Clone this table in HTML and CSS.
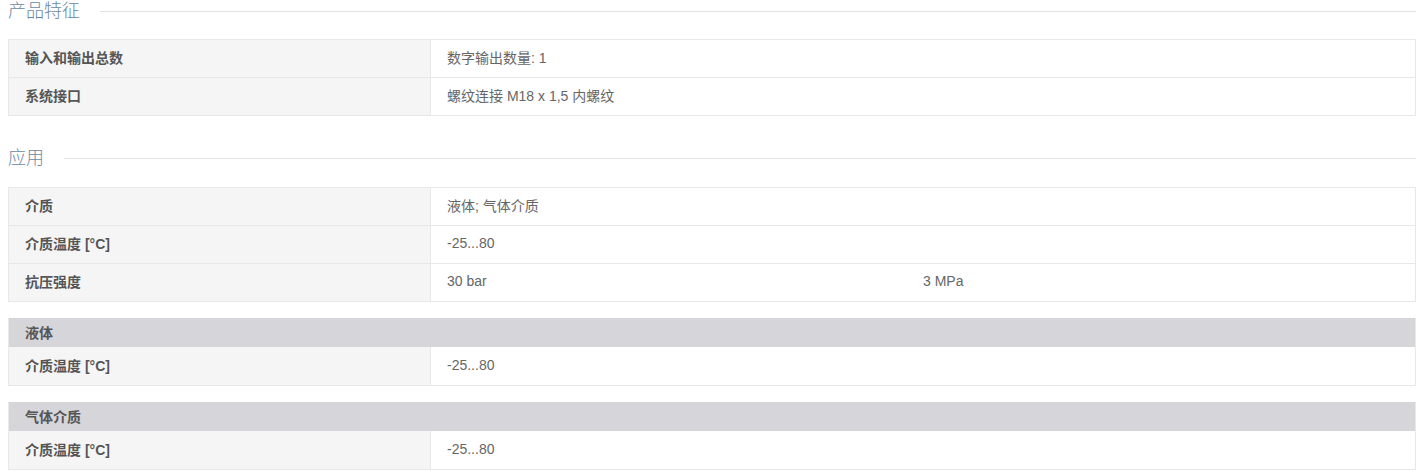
FILE: index.html
```html
<!DOCTYPE html>
<html lang="zh-CN">
<head>
<meta charset="utf-8">
<title>产品特征</title>
<link rel="stylesheet" href="styles.css">
</head>
<body>
<main class="specs">
  <section class="spec-section">
    <div class="spec-head"><h2 class="spec-title">产品特征</h2><span class="spec-rule"></span></div>
    <div class="spec-table">
      <div class="spec-row"><div class="spec-label">输入和输出总数</div><div class="spec-value">数字输出数量: 1</div></div>
      <div class="spec-row"><div class="spec-label">系统接口</div><div class="spec-value">螺纹连接 M18 x 1,5 内螺纹</div></div>
    </div>
  </section>

  <section class="spec-section">
    <div class="spec-head"><h2 class="spec-title">应用</h2><span class="spec-rule"></span></div>
    <div class="spec-table">
      <div class="spec-row"><div class="spec-label">介质</div><div class="spec-value">液体; 气体介质</div></div>
      <div class="spec-row"><div class="spec-label">介质温度 [°C]</div><div class="spec-value">-25...80</div></div>
      <div class="spec-row"><div class="spec-label">抗压强度</div><div class="spec-value"><span class="spec-sub">30 bar</span><span class="spec-sub">3 MPa</span></div></div>
    </div>
    <div class="spec-table spec-group">
      <div class="group-head">液体</div>
      <div class="spec-row"><div class="spec-label">介质温度 [°C]</div><div class="spec-value">-25...80</div></div>
    </div>
    <div class="spec-table spec-group">
      <div class="group-head">气体介质</div>
      <div class="spec-row"><div class="spec-label">介质温度 [°C]</div><div class="spec-value">-25...80</div></div>
    </div>
  </section>
</main>
</body>
</html>
```

FILE: styles.css
```css
* { box-sizing: border-box; }

html, body {
  margin: 0;
  padding: 0;
  background: #ffffff;
}

body {
  font-family: "Liberation Sans", "Noto Sans CJK SC", Arial, sans-serif;
  font-size: 14px;
  color: #666666;
}

.specs {
  width: 1408px;
  margin-left: 8px;
}

.spec-section + .spec-section {
  margin-top: 31px;
}

.spec-head {
  display: flex;
  align-items: center;
  gap: 20px;
  height: 22px;
  margin-bottom: 17px;
}

.spec-section + .spec-section .spec-head {
  margin-bottom: 18px;
}

.spec-title {
  margin: 0;
  font-size: 18px;
  line-height: 22px;
  font-weight: 300;
  color: #6a89a1;
  white-space: nowrap;
}

.spec-rule {
  flex: 1;
  height: 1px;
  background: #e2e2e2;
}

.spec-table {
  border: 1px solid #e8e8e8;
}

.spec-row {
  display: grid;
  grid-template-columns: 422px 1fr;
  height: 38px;
  border-top: 1px solid #e8e8e8;
}

.spec-row:first-child {
  height: 37px;
  border-top: 0;
}

.spec-label {
  display: flex;
  align-items: center;
  padding: 0 0 3px 16px;
  background: #f5f5f5;
  border-right: 1px solid #e8e8e8;
  font-weight: bold;
  color: #555555;
  font-size: 14px;
}

.spec-value {
  display: flex;
  align-items: center;
  padding: 0 0 3px 16px;
  color: #666666;
  font-size: 14px;
}

.spec-sub:first-child {
  width: 476px;
}

.spec-group {
  margin-top: 16px;
  border-top: 0;
}

.spec-group .spec-row {
  height: 38px;
  border-top: 0;
}

.group-head {
  display: flex;
  align-items: center;
  height: 29px;
  padding: 0 0 2px 16px;
  background: #d6d5da;
  font-weight: bold;
  font-size: 14px;
  color: #555555;
}
```
